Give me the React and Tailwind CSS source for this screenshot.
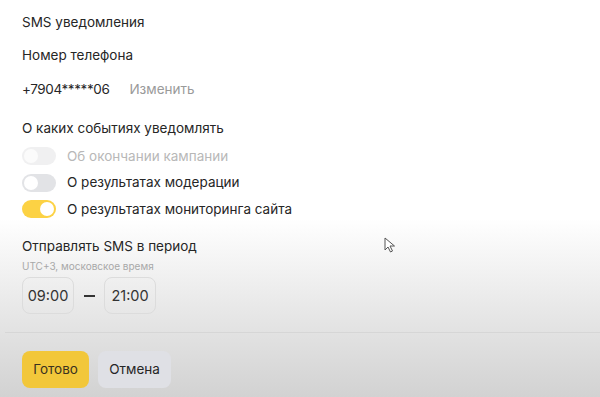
export default function App() {
  const font = { fontFamily: 'Inter, "Noto Sans", sans-serif' };
  return (
    <div
      className="relative w-[600px] h-[397px] overflow-hidden bg-linear-to-b from-white from-55% to-[#d2d2d2] text-[#262626] flex flex-col"
      style={font}
    >
      <div className="flex flex-col px-[22px]">
        <div className="text-[13.5px] leading-[18px] mt-[13px]">SMS уведомления</div>
        <div className="text-[13.5px] leading-[18px] mt-[15px]">Номер телефона</div>
        <div className="flex items-center text-[13.5px] leading-[18px] mt-[16px]">
          <span className="tracking-[-0.4px]">+7904*****06</span>
          <span className="ml-[20px] text-[#9a9a9a]">Изменить</span>
        </div>
        <div className="text-[13.5px] leading-[18px] mt-[21px]">О каких событиях уведомлять</div>
        <div className="flex flex-col gap-[8.5px] mt-[10px]">
          <div className="flex items-center gap-[11px] h-[18px]">
            <div className="w-[34px] h-[18px] rounded-full bg-[#f0f0f1] flex items-center px-[2px]">
              <div className="w-[14px] h-[14px] rounded-full bg-[#fbfbfb]" />
            </div>
            <span className="text-[13.5px] text-[#b8b8b8]">Об окончании кампании</span>
          </div>
          <div className="flex items-center gap-[11px] h-[18px]">
            <div className="w-[34px] h-[18px] rounded-full bg-[#e2e3e6] flex items-center px-[2px]">
              <div className="w-[14px] h-[14px] rounded-full bg-white" />
            </div>
            <span className="text-[13.5px]">О результатах модерации</span>
          </div>
          <div className="flex items-center gap-[11px] h-[18px]">
            <div className="w-[34px] h-[18px] rounded-full bg-[#fcd244] flex items-center justify-end px-[2px]">
              <div className="w-[14px] h-[14px] rounded-full bg-white" />
            </div>
            <span className="text-[13.5px]">О результатах мониторинга сайта</span>
          </div>
        </div>
        <div className="text-[13.5px] leading-[18px] mt-[19px]">Отправлять SMS в период</div>
        <div className="text-[10px] leading-[14px] mt-[4px] text-[#a8a8a8]">UTC+3, московское время</div>
        <div className="flex items-center mt-[4px]">
          <div className="w-[52px] h-[37px] rounded-lg border border-[#dcdcdc] flex items-center justify-center text-[14.5px] text-[#333]">09:00</div>
          <div className="w-[30px] flex justify-center">
            <div className="w-[11px] h-[2px] bg-[#333]" />
          </div>
          <div className="w-[52px] h-[37px] rounded-lg border border-[#dcdcdc] flex items-center justify-center text-[14.5px] text-[#333]">21:00</div>
        </div>
      </div>
      <div className="ml-[5px] mt-[18px] h-px bg-[#d6d6d6]" />
      <div className="flex gap-[9px] px-[22px] mt-[18px]">
        <div className="w-[67px] h-[37px] rounded-lg bg-[#f2c73a] flex items-center justify-center text-[13.5px] text-[#3a3220]">Готово</div>
        <div className="w-[73px] h-[37px] rounded-lg bg-[#dfe0e5] flex items-center justify-center text-[13.5px]">Отмена</div>
      </div>
      <svg className="absolute left-[384px] top-[237px]" width="12" height="16" viewBox="0 0 12 16">
        <path d="M1 1 L1 13 L4 10 L6.5 15 L8.5 14 L6 9 L10.5 9 Z" fill="#fff" stroke="#555" strokeWidth="1" strokeLinejoin="round" />
      </svg>
    </div>
  );
}
